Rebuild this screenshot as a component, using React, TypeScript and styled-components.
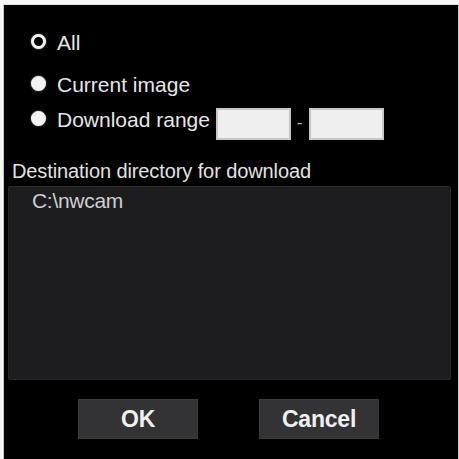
import React from 'react'
import styled, { createGlobalStyle } from 'styled-components'

const GlobalStyle = createGlobalStyle`
  html, body {
    margin: 0;
    padding: 0;
    background: #f6f6f6;
    overflow: hidden;
  }
`

const Panel = styled.div`
  box-sizing: border-box;
  margin: 4px 0 0 3px;
  width: 456px;
  height: 470px;
  background: #000;
  border: 1px solid #c4c4c4;
  border-top-color: #e0e0e0;
  font-family: 'Liberation Sans', Arial, sans-serif;
  color: #e6e6e6;
`

const Options = styled.div`
  display: flex;
  flex-direction: column;
  padding: 22px 0 0 27px;
`

const OptionRow = styled.label<{ $mt: number }>`
  display: flex;
  align-items: center;
  height: 32px;
  margin-top: ${(p) => p.$mt}px;
  font-size: 21px;
`

const Radio = styled.span<{ $checked?: boolean }>`
  box-sizing: border-box;
  flex: none;
  width: 15px;
  height: 15px;
  border-radius: 50%;
  margin: 0 11px 4px 0;
  background: ${(p) => (p.$checked ? '#000' : '#f2f2f2')};
  border: 3px solid #f2f2f2;
  box-shadow: 0 0 2px rgba(255, 255, 255, 0.6);
`

const RangeInput = styled.span`
  box-sizing: border-box;
  flex: none;
  display: inline-block;
  width: 75px;
  height: 32px;
  margin-top: 8px;
  background: #efefef;
  border: 2px solid #c6c6c6;
`

const Dash = styled.span`
  margin: 6px 7px 0 6px;
  font-size: 17px;
  color: #bdbdbd;
`

const DestLabel = styled.div`
  margin: 24px 0 0 8px;
  font-size: 20px;
  letter-spacing: -0.1px;
  color: #e2e2e2;
`

const DirBox = styled.div`
  box-sizing: border-box;
  margin: 3px 0 0 4px;
  width: 443px;
  height: 194px;
  background: #1d1d20;
  border: 1px solid #2a2a2c;
  border-radius: 2px;
  padding: 2px 0 0 23px;
  font-size: 21px;
  letter-spacing: -0.3px;
  color: #cfcfcf;
`

const ButtonBar = styled.div`
  display: flex;
  gap: 61px;
  margin: 19px 0 0 74px;
`

const Button = styled.div`
  box-sizing: border-box;
  width: 120px;
  height: 40px;
  display: flex;
  align-items: center;
  justify-content: center;
  background: #333335;
  border: 1px solid #3c3c3e;
  font-size: 23px;
  font-weight: bold;
  letter-spacing: -0.2px;
  color: #f0f0f0;
`

export default function App() {
  return (
    <>
      <GlobalStyle />
      <Panel>
        <Options>
          <OptionRow $mt={0}>
            <Radio $checked />
            All
          </OptionRow>
          <OptionRow $mt={10}>
            <Radio />
            Current image
          </OptionRow>
          <OptionRow $mt={3}>
            <Radio />
            Download range&nbsp;
            <RangeInput />
            <Dash>-</Dash>
            <RangeInput />
          </OptionRow>
        </Options>
        <DestLabel>Destination directory for download</DestLabel>
        <DirBox>C:\nwcam</DirBox>
        <ButtonBar>
          <Button>OK</Button>
          <Button>Cancel</Button>
        </ButtonBar>
      </Panel>
    </>
  )
}
